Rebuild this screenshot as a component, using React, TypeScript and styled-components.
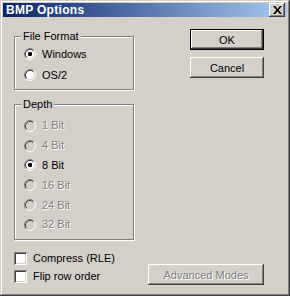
import React from 'react';
import { styled, createGlobalStyle } from 'styled-components';

const GlobalStyle = createGlobalStyle`
  html, body {
    margin: 0;
    padding: 0;
    background: #d4d0c8;
  }
  * {
    box-sizing: border-box;
  }
`;

const Window = styled.div`
  width: 290px;
  height: 296px;
  padding: 3px;
  display: flex;
  flex-direction: column;
  background: #d4d0c8;
  font-family: 'Liberation Sans', Arial, sans-serif;
  font-size: 11px;
  color: #000;
  box-shadow: inset -1px -1px #404040, inset 1px 1px #d4d0c8,
    inset -2px -2px #808080, inset 2px 2px #ffffff;
`;

const TitleBar = styled.div`
  height: 18px;
  display: flex;
  align-items: center;
  justify-content: space-between;
  padding: 0 2px 0 3px;
  background: linear-gradient(to right, #0a246a, #a6caf0);
`;

const Title = styled.span`
  color: #fff;
  font-weight: bold;
  font-size: 12px;
  letter-spacing: 0.3px;
`;

const CloseButton = styled.div`
  width: 16px;
  height: 14px;
  display: flex;
  align-items: center;
  justify-content: center;
  background: #d4d0c8;
  box-shadow: inset -1px -1px #404040, inset 1px 1px #ffffff,
    inset -2px -2px #808080, inset 2px 2px #d4d0c8;
`;

const Body = styled.div`
  flex: 1;
  display: flex;
  gap: 14px;
  padding: 12px 23px 9px 11px;
`;

const LeftCol = styled.div`
  width: 122px;
  display: flex;
  flex-direction: column;
  padding-top: 7px;
`;

const RightCol = styled.div`
  flex: 1;
  display: flex;
  flex-direction: column;
  align-items: flex-end;
`;

const Group = styled.div<{ $height: number; $top?: number }>`
  position: relative;
  height: ${({ $height }) => $height}px;
  margin-top: ${({ $top }) => $top ?? 0}px;
  border: 1px solid #808080;
  box-shadow: inset 1px 1px #ffffff, 1px 1px #ffffff;
  padding: ${({ $top }) => ($top ? 11 : 10)}px 0 0 9px;
  display: flex;
  flex-direction: column;
`;

const Legend = styled.span`
  position: absolute;
  top: -7px;
  left: 6px;
  padding: 0 2px;
  background: #d4d0c8;
  line-height: 13px;
`;

const Row = styled.div<{ $h: number }>`
  height: ${({ $h }) => $h}px;
  display: flex;
  align-items: center;
  gap: 6px;
`;

const Label = styled.span<{ $disabled?: boolean }>`
  color: ${({ $disabled }) => ($disabled ? '#808080' : '#000')};
  text-shadow: ${({ $disabled }) => ($disabled ? '1px 1px 0 #ffffff' : 'none')};
  line-height: 13px;
`;

const CheckBox = styled.span`
  width: 13px;
  height: 13px;
  background: #fff;
  box-shadow: inset 1px 1px #808080, inset -1px -1px #ffffff,
    inset 2px 2px #404040, inset -2px -2px #d4d0c8;
`;

const Checks = styled.div`
  margin-top: 9px;
  display: flex;
  flex-direction: column;
`;

const Button = styled.div<{ $width: number; $default?: boolean; $disabled?: boolean }>`
  width: ${({ $width }) => $width}px;
  height: 21px;
  display: flex;
  align-items: center;
  justify-content: center;
  background: #d4d0c8;
  color: ${({ $disabled }) => ($disabled ? '#808080' : '#000')};
  text-shadow: ${({ $disabled }) => ($disabled ? '1px 1px 0 #ffffff' : 'none')};
  box-shadow: ${({ $default }) =>
    $default
      ? 'inset 0 0 0 1px #000, inset -2px -2px #404040, inset 2px 2px #ffffff, inset -3px -3px #808080'
      : 'inset -1px -1px #404040, inset 1px 1px #ffffff, inset -2px -2px #808080'};
`;

const Spacer = styled.div`
  flex: 1;
`;

const Radio = ({ checked, disabled }: { checked?: boolean; disabled?: boolean }) => (
  <svg width="12" height="12" viewBox="0 0 12 12">
    <circle cx="6" cy="6" r="4.5" fill={disabled ? '#d4d0c8' : '#ffffff'} />
    <path d="M2.11 9.89 A5.5 5.5 0 0 1 9.89 2.11" fill="none" stroke="#808080" />
    <path d="M9.89 2.11 A5.5 5.5 0 0 1 2.11 9.89" fill="none" stroke="#ffffff" />
    <path d="M2.82 9.18 A4.5 4.5 0 0 1 9.18 2.82" fill="none" stroke="#404040" />
    <path d="M9.18 2.82 A4.5 4.5 0 0 1 2.82 9.18" fill="none" stroke="#d4d0c8" />
    {checked && <rect x="4" y="4" width="4" height="4" rx="1.2" fill="#000" />}
  </svg>
);

const depths = [
  { label: '1 Bit', disabled: true },
  { label: '4 Bit', disabled: true },
  { label: '8 Bit', checked: true },
  { label: '16 Bit', disabled: true },
  { label: '24 Bit', disabled: true },
  { label: '32 Bit', disabled: true },
];

export default function App() {
  return (
    <>
      <GlobalStyle />
      <Window>
        <TitleBar>
          <Title>BMP Options</Title>
          <CloseButton>
            <svg width="9" height="8" viewBox="0 0 8 7">
              <path d="M0 0h2l2 2.5L6 0h2L5 3.5 8 7H6L4 4.5 2 7H0l3-3.5z" fill="#000" />
            </svg>
          </CloseButton>
        </TitleBar>
        <Body>
          <LeftCol>
            <Group $height={54}>
              <Legend>File Format</Legend>
              <Row $h={14}>
                <Radio checked />
                <Label>Windows</Label>
              </Row>
              <Row $h={14} style={{ marginTop: 7 }}>
                <Radio />
                <Label>OS/2</Label>
              </Row>
            </Group>
            <Group $height={136} $top={14}>
              <Legend>Depth</Legend>
              {depths.map((d) => (
                <Row key={d.label} $h={19.8}>
                  <Radio checked={d.checked} disabled={d.disabled} />
                  <Label $disabled={d.disabled}>{d.label}</Label>
                </Row>
              ))}
            </Group>
            <Checks>
              <Row $h={18}>
                <CheckBox />
                <Label>Compress (RLE)</Label>
              </Row>
              <Row $h={18}>
                <CheckBox />
                <Label>Flip row order</Label>
              </Row>
            </Checks>
          </LeftCol>
          <RightCol>
            <Button $width={74} $default>OK</Button>
            <Button $width={74} style={{ marginTop: 7 }}>Cancel</Button>
            <Spacer />
            <Button $width={116} $disabled>Advanced Modes</Button>
          </RightCol>
        </Body>
      </Window>
    </>
  );
}
